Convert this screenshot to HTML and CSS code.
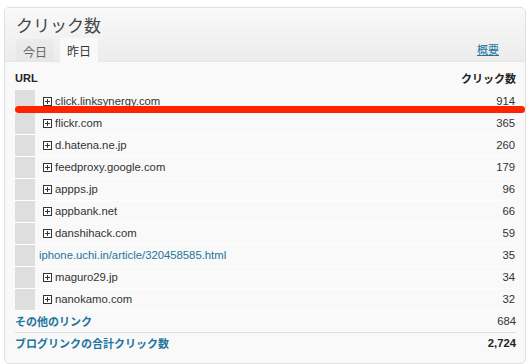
FILE: index.html
```html
<!DOCTYPE html>
<html lang="ja">
<head>
    <meta charset="UTF-8">
    <title>クリック数</title>
    <link rel="stylesheet" href="styles.css">
</head>
<body>
    <div class="widget">
        <div class="widget-head">
            <h3 class="widget-title">クリック数</h3>
            <div class="tabs">
                <span class="tab">今日</span>
                <span class="tab active">昨日</span>
                <a class="summary" href="#">概要</a>
            </div>
        </div>
        <div class="widget-body">
            <table class="clicks">
                <thead>
                    <tr>
                        <th colspan="2" class="th-url">URL</th>
                        <th class="th-num">クリック数</th>
                    </tr>
                </thead>
                <tbody>
                    <tr><td class="box"></td><td class="url"><span class="plus"></span>click.linksynergy.com</td><td class="num">914</td></tr>
                    <tr><td class="box"></td><td class="url"><span class="plus"></span>flickr.com</td><td class="num">365</td></tr>
                    <tr><td class="box"></td><td class="url"><span class="plus"></span>d.hatena.ne.jp</td><td class="num">260</td></tr>
                    <tr><td class="box"></td><td class="url"><span class="plus"></span>feedproxy.google.com</td><td class="num">179</td></tr>
                    <tr><td class="box"></td><td class="url"><span class="plus"></span>appps.jp</td><td class="num">96</td></tr>
                    <tr><td class="box"></td><td class="url"><span class="plus"></span>appbank.net</td><td class="num">66</td></tr>
                    <tr><td class="box"></td><td class="url"><span class="plus"></span>danshihack.com</td><td class="num">59</td></tr>
                    <tr><td class="box"></td><td class="url link"><a href="#">iphone.uchi.in/article/320458585.html</a></td><td class="num">35</td></tr>
                    <tr><td class="box"></td><td class="url"><span class="plus"></span>maguro29.jp</td><td class="num">34</td></tr>
                    <tr><td class="box"></td><td class="url"><span class="plus"></span>nanokamo.com</td><td class="num">32</td></tr>
                    <tr class="other"><td colspan="2"><a href="#">その他のリンク</a></td><td class="num">684</td></tr>
                </tbody>
                <tfoot>
                    <tr class="total"><td colspan="2"><a href="#">ブログリンクの合計クリック数</a></td><td class="num">2,724</td></tr>
                </tfoot>
            </table>
            <div class="marker"></div>
        </div>
    </div>
</body>
</html>
```

FILE: styles.css
```css
html, body {
    margin: 0;
    background: #ffffff;
}
body {
    font-family: "Liberation Sans", "Noto Sans CJK JP", sans-serif;
    color: #333333;
}
.widget {
    margin: 7px 6px 0 4px;
    border: 1px solid #dfdfdf;
    border-radius: 5px;
    background: #f9f9f9;
    height: 355px;
    overflow: hidden;
}
.widget-head {
    background: linear-gradient(#f9f9f9, #ececec);
    border-bottom: 1px solid #e6e6e6;
    padding: 0 0 0 11px;
    height: 53px;
    display: flex;
    flex-direction: column;
    justify-content: space-between;
}
.widget-title {
    margin: 0;
    padding-top: 7px;
    font-family: "Noto Sans CJK JP", sans-serif;
    font-size: 17px;
    font-weight: normal;
    color: #464646;
    line-height: 20px;
}
.tabs {
    display: flex;
    align-items: flex-end;
    gap: 6px;
    padding-right: 26px;
}
.tab {
    font-family: "Noto Sans CJK JP", sans-serif;
    font-size: 12px;
    line-height: 15px;
    padding: 5px 7px 3px 7px;
    margin-bottom: -1px;
    background: linear-gradient(#ececec, #e6e6e6);
    border-radius: 3px 3px 0 0;
    color: #666666;
}
.tab.active {
    background: #f9f9f9;
    color: #333333;
    padding-bottom: 4px;
}
.summary {
    margin-left: auto;
    margin-bottom: 5px;
    font-family: "Noto Sans CJK JP", sans-serif;
    font-size: 11px;
    line-height: 14px;
    color: #21759b;
}
.widget-body {
    position: relative;
    padding: 5px 9px 0 10px;
}
.clicks {
    width: 100%;
    border-collapse: collapse;
    font-size: 11.3px;
}
.clicks th {
    font-family: "Liberation Sans", "Noto Sans CJK JP", sans-serif;
    font-size: 11px;
    font-weight: bold;
    color: #222222;
    height: 22px;
    padding: 0 0 1px 0;
}
.th-url {
    text-align: left;
}
.th-num {
    text-align: right;
}
.clicks tbody tr {
    height: 22px;
}
.clicks tbody tr + tr td {
    border-top: 1px solid #fdfdfd;
}
.box {
    width: 20px;
    padding: 0;
    background: #dedede;
    border-bottom: 1px solid #ffffff;
}
.url {
    padding: 0 0 0 4px;
    color: #333333;
    white-space: nowrap;
}
.url a, .other a, .total a {
    color: #21759b;
    text-decoration: none;
}
.plus {
    display: inline-block;
    position: relative;
    width: 7px;
    height: 7px;
    border: 1px solid #333333;
    background: #ffffff;
    margin: 0 3px 0 4px;
    vertical-align: -1px;
}
.plus::before, .plus::after {
    content: "";
    position: absolute;
    background: #333333;
}
.plus::before {
    left: 1px;
    top: 3px;
    width: 5px;
    height: 1px;
}
.plus::after {
    left: 3px;
    top: 1px;
    width: 1px;
    height: 5px;
}
.num {
    text-align: right;
    padding: 0 1px 0 0;
    color: #333333;
}
.other td {
    padding: 0;
    font-family: "Noto Sans CJK JP", sans-serif;
    font-weight: bold;
    font-size: 11px;
}
.other .num {
    font-family: "Liberation Sans", sans-serif;
    font-weight: normal;
    font-size: 11.3px;
}
.total td {
    border-top: 1px solid #dfdfdf;
    height: 21px;
    padding: 0;
    font-family: "Noto Sans CJK JP", sans-serif;
    font-weight: bold;
    font-size: 11px;
}
.total .num {
    font-family: "Liberation Sans", sans-serif;
    font-size: 11.3px;
    color: #222222;
}
.marker {
    position: absolute;
    left: 10px;
    right: 0;
    top: 44px;
    height: 7px;
    border-radius: 4px;
    background: #ff2400;
}
```
